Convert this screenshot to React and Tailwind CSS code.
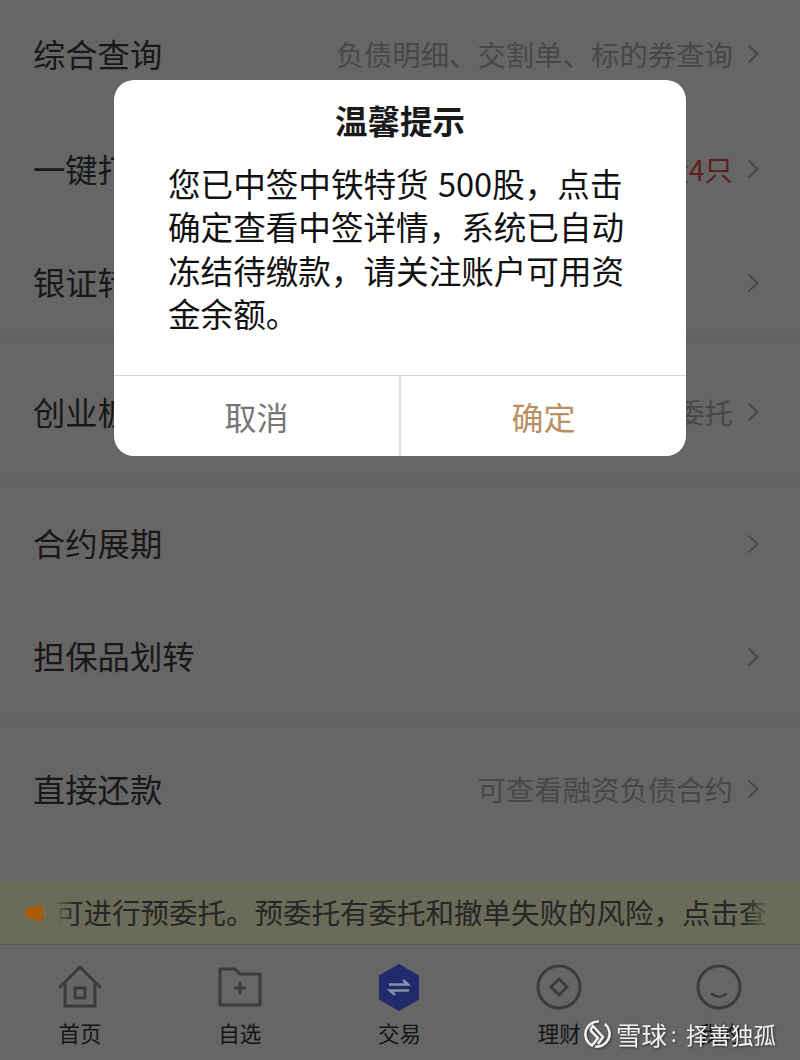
const font = { fontFamily: '"Noto Sans CJK SC", sans-serif' };

const Chevron = () => (
  <svg width="12" height="20" viewBox="0 0 12 20" fill="none" stroke="#474747" strokeWidth="2" className="shrink-0">
    <path d="M1.5 1.5 L10.5 10 L1.5 18.5" />
  </svg>
);

const Row = ({ title, hint, hintClass = 'text-[#484848]', className = '' }) => (
  <div className={`flex items-center justify-between pl-[33px] pr-[41px] ${className}`}>
    <span className="text-[32.3px] text-[#181818]">{title}</span>
    <div className="flex items-center gap-[14px] mt-[3px]">
      {hint && <span className={`text-[28.4px] ${hintClass}`}>{hint}</span>}
      <Chevron />
    </div>
  </div>
);

const Divider = ({ className = '' }) => <div className={`bg-linear-to-b from-[#666666] via-[#626262] to-[#666666] ${className}`} />;

const NavItem = ({ icon, label }) => (
  <div className="flex-1 flex flex-col items-center">
    <div className="h-[48px] flex items-center justify-center">{icon}</div>
    <span className="text-[21.5px] leading-[28px] text-[#141414] mt-[8px]">{label}</span>
  </div>
);

const HomeIcon = () => (
  <svg width="46" height="44" viewBox="0 0 46 44" fill="none" stroke="#3c3c3c" strokeWidth="3">
    <path d="M2 23 L23 2 L44 23" />
    <path d="M8 19 V41 H38 V19" />
    <rect x="18" y="23" width="10" height="10" />
  </svg>
);

const FolderIcon = () => (
  <svg width="44" height="40" viewBox="0 0 44 40" fill="none" stroke="#3c3c3c" strokeWidth="3">
    <path d="M2 2 H17 L22 7 H42 V38 H2 Z" />
    <path d="M22 15 V27 M16 21 H28" />
  </svg>
);

const TradeIcon = () => (
  <svg width="42" height="47" viewBox="0 0 42 47">
    <path d="M21 0 L41 11.5 V35.5 L21 47 L1 35.5 V11.5 Z" fill="#202a6c" />
    <path d="M11 20.5 H30 L25 16 M31 26.5 H12 L17 31" fill="none" stroke="#8b8fa3" strokeWidth="2.5" />
  </svg>
);

const CoinIcon = () => (
  <svg width="46" height="46" viewBox="0 0 46 46" fill="none" stroke="#3c3c3c" strokeWidth="3">
    <circle cx="23" cy="23" r="21" />
    <path d="M23 15 L31 23 L23 31 L15 23 Z" />
  </svg>
);

const SmileIcon = () => (
  <svg width="46" height="46" viewBox="0 0 46 46" fill="none" stroke="#3c3c3c" strokeWidth="3">
    <circle cx="23" cy="23" r="21" />
    <path d="M15 29.5 Q23 36 31 29.5" strokeWidth="2.5" />
  </svg>
);

const SpeakerIcon = () => (
  <svg width="22" height="20" viewBox="0 0 22 20" className="shrink-0">
    <path d="M0 7 Q0 5 2 5 H7 L15 1 Q17 0 17 2 V18 Q17 20 15 19 L7 15 H2 Q0 15 0 13 Z" fill="#ad5a08" />
    <path d="M19 6.5 Q21.5 10 19 13.5" fill="none" stroke="#9a7038" strokeWidth="1.5" />
  </svg>
);

export default function App() {
  return (
    <div className="relative w-[800px] h-[1060px] overflow-hidden bg-[#666666] flex flex-col" style={font}>
      <Row title="综合查询" hint="负债明细、交割单、标的券查询" className="h-[106px]" />
      <Row title="一键打新" hint="可申购新股4只" hintClass="text-[#5e1f1f]" className="h-[124px]" />
      <Row title="银证转账" className="h-[102px]" />
      <Divider className="h-[14px]" />
      <Row title="创业板权限" hint="预委托" className="h-[130px]" />
      <Divider className="h-[14px]" />
      <Row title="合约展期" className="h-[104px]" />
      <Row title="担保品划转" className="h-[122px]" />
      <Divider className="h-[14px]" />
      <Row title="直接还款" hint="可查看融资负债合约" className="h-[116px]" />
      <div className="flex-1" />
      <div className="relative h-[64px] bg-[#6a6b58] border-b border-[#5b5c4b] flex items-center pl-[25px] overflow-hidden">
        <SpeakerIcon />
        <span className="ml-[8px] text-[28.5px] text-[#262626] whitespace-nowrap">可进行预委托。预委托有委托和撤单失败的风险，点击查</span>
        <div className="absolute left-[55px] top-0 h-full w-[20px] bg-linear-to-r from-[#6a6b58] to-transparent" />
        <div className="absolute left-[746px] top-0 h-full w-[24px] bg-linear-to-r from-transparent to-[#6a6b58]" />
      </div>
      <div className="h-[115px] flex pt-[18px] pr-[1px]">
        <NavItem icon={<HomeIcon />} label="首页" />
        <NavItem icon={<FolderIcon />} label="自选" />
        <NavItem icon={<TradeIcon />} label="交易" />
        <NavItem icon={<CoinIcon />} label="理财" />
        <NavItem icon={<SmileIcon />} label="我的" />
      </div>

      <div className="absolute left-[114px] top-[80px] w-[572px] h-[376px] bg-white rounded-[20px] flex flex-col overflow-hidden">
        <div className="flex-1 px-[54px]">
          <div className="text-[32.5px] font-bold text-center text-[#1a1a1a] mt-[18px] leading-[44px]">温馨提示</div>
          <p className="text-[32.6px] leading-[43.4px] text-[#111111] mt-[19px]">您已中签中铁特货 <span className="ml-[2px]">500</span>股，点击确定查看中签详情，系统已自动冻结待缴款，请关注账户可用资金余额。</p>
        </div>
        <div className="h-[81px] border-t border-[#d6d6d6] flex">
          <div className="flex-1 flex items-center justify-center text-[32px] text-[#777777] border-r-2 border-[#e2e2e2]">取消</div>
          <div className="flex-1 flex items-center justify-center text-[32px] text-[#b98f63]">确定</div>
        </div>
      </div>

      <div className="absolute left-[583px] top-[1019px] flex items-center text-[#f4f4f4] drop-shadow-[1px_1px_1px_rgba(0,0,0,0.5)]">
        <svg width="28" height="30" viewBox="0 0 28 30" fill="none" stroke="#f0f0f0" strokeWidth="2.6">
          <path d="M16 2.5 A12.8 12.8 0 0 0 9 26.5 L15 19 L9 13 Q7 11 8.5 9 L10 7 L20 18 L15 25" />
          <path d="M12 27.5 A12.8 12.8 0 0 0 22 5" />
        </svg>
        <span className="ml-[5px] text-[25.5px] leading-[30px] whitespace-nowrap">雪球</span>
        <span className="ml-[4px] w-[15px] text-[20px] leading-[30px]">:</span>
        <span className="text-[22.5px] leading-[30px] whitespace-nowrap">择善独孤</span>
      </div>
    </div>
  );
}
